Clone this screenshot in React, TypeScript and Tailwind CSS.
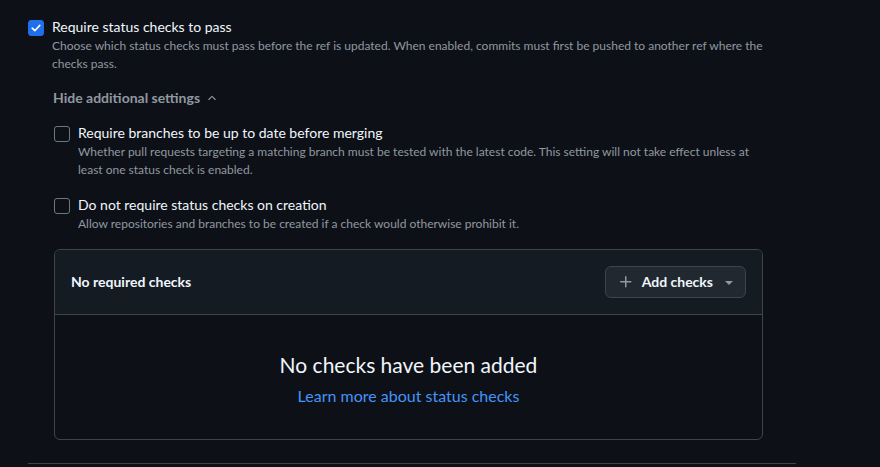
import React, { useState } from 'react';

const Checkbox = ({ checked, onClick }: { checked: boolean; onClick: () => void }) => {
  return (
    <div
      onClick={onClick}
      className={
        checked
          ? 'w-4 h-4 shrink-0 rounded-[3px] bg-[#1f6feb] border border-[#1f6feb] flex items-center justify-center cursor-pointer'
          : 'w-4 h-4 shrink-0 rounded-[3px] border border-[#6e7681] cursor-pointer'
      }
    >
      {checked && (
        <svg width="12" height="12" viewBox="0 0 12 12" fill="none">
          <path d="M2.2 6.2 4.8 8.7 9.8 3.4" stroke="#ffffff" strokeWidth="1.6" strokeLinecap="round" strokeLinejoin="round" />
        </svg>
      )}
    </div>
  );
};

const Option = ({
  label,
  desc,
  checked,
  onToggle,
}: {
  label: string;
  desc: string;
  checked: boolean;
  onToggle: () => void;
}) => {
  return (
    <div className="flex gap-2">
      <div className="pt-[3px]">
        <Checkbox checked={checked} onClick={onToggle} />
      </div>
      <div>
        <div className="text-sm leading-5 text-[#f0f6fc]">{label}</div>
        <div className="text-xs leading-[18px] text-[#9198a1]">{desc}</div>
      </div>
    </div>
  );
};

export default function App() {
  const [required, setRequired] = useState(true);
  const [upToDate, setUpToDate] = useState(false);
  const [onCreation, setOnCreation] = useState(false);

  return (
    <div
      className="w-[880px] h-[467px] overflow-hidden bg-[#0d1117] text-[#f0f6fc]"
      style={{ fontFamily: 'Lato, "Liberation Sans", sans-serif' }}
    >
      <div className="w-[768px] ml-[28px] pt-[17px]">
        {/* require status checks */}
        <Option
          label="Require status checks to pass"
          desc="Choose which status checks must pass before the ref is updated. When enabled, commits must first be pushed to another ref where the checks pass."
          checked={required}
          onToggle={() => setRequired(!required)}
        />

        <div className="ml-[25px] mr-[33px]">
          {/* hide additional settings */}
          <div className="mt-[15px] flex items-center gap-[6px] text-sm font-bold text-[#9198a1] cursor-pointer">
            <span>Hide additional settings</span>
            <svg width="12" height="12" viewBox="0 0 16 16" fill="currentColor">
              <path d="M3.22 10.53a.75.75 0 0 1 0-1.06l4.25-4.25a.75.75 0 0 1 1.06 0l4.25 4.25a.75.75 0 0 1-1.06 1.06L8 6.81 4.28 10.53a.75.75 0 0 1-1.06 0Z" />
            </svg>
          </div>

          <div className="ml-px mt-[15px] flex flex-col gap-[16px]">
            <Option
              label="Require branches to be up to date before merging"
              desc="Whether pull requests targeting a matching branch must be tested with the latest code. This setting will not take effect unless at least one status check is enabled."
              checked={upToDate}
              onToggle={() => setUpToDate(!upToDate)}
            />
            <Option
              label="Do not require status checks on creation"
              desc="Allow repositories and branches to be created if a check would otherwise prohibit it."
              checked={onCreation}
              onToggle={() => setOnCreation(!onCreation)}
            />
          </div>

          {/* checks box */}
          <div className="ml-px mt-[16px] border border-[#3d444d] rounded-md overflow-hidden">
            <div className="h-[65px] bg-[#151b23] border-b border-[#3d444d] flex items-center justify-between pl-4 pr-4">
              <span className="text-sm font-bold">No required checks</span>
              <button className="h-8 pl-3 pr-2 flex items-center gap-2 rounded-md border border-[#3d444d] bg-[#212830] text-sm font-bold text-[#f0f6fc]">
                <svg width="16" height="16" viewBox="0 0 16 16" fill="#9198a1">
                  <path d="M7.75 2a.75.75 0 0 1 .75.75V7h4.25a.75.75 0 0 1 0 1.5H8.5v4.25a.75.75 0 0 1-1.5 0V8.5H2.75a.75.75 0 0 1 0-1.5H7V2.75A.75.75 0 0 1 7.75 2Z" />
                </svg>
                <span>Add checks</span>
                <svg width="16" height="16" viewBox="0 0 16 16" fill="#9198a1">
                  <path d="m4.427 7.427 3.396 3.396a.25.25 0 0 0 .354 0l3.396-3.396A.25.25 0 0 0 11.396 7H4.604a.25.25 0 0 0-.177.427Z" />
                </svg>
              </button>
            </div>
            <div className="h-[124px] flex flex-col items-center pt-[36px]">
              <div className="text-[21px] leading-7">No checks have been added</div>
              <a className="mt-[5px] text-base leading-6 text-[#4493f8] cursor-pointer">Learn more about status checks</a>
            </div>
          </div>
        </div>

        <div className="mt-[23px] border-t border-[#3d444d]" />
      </div>
    </div>
  );
}
